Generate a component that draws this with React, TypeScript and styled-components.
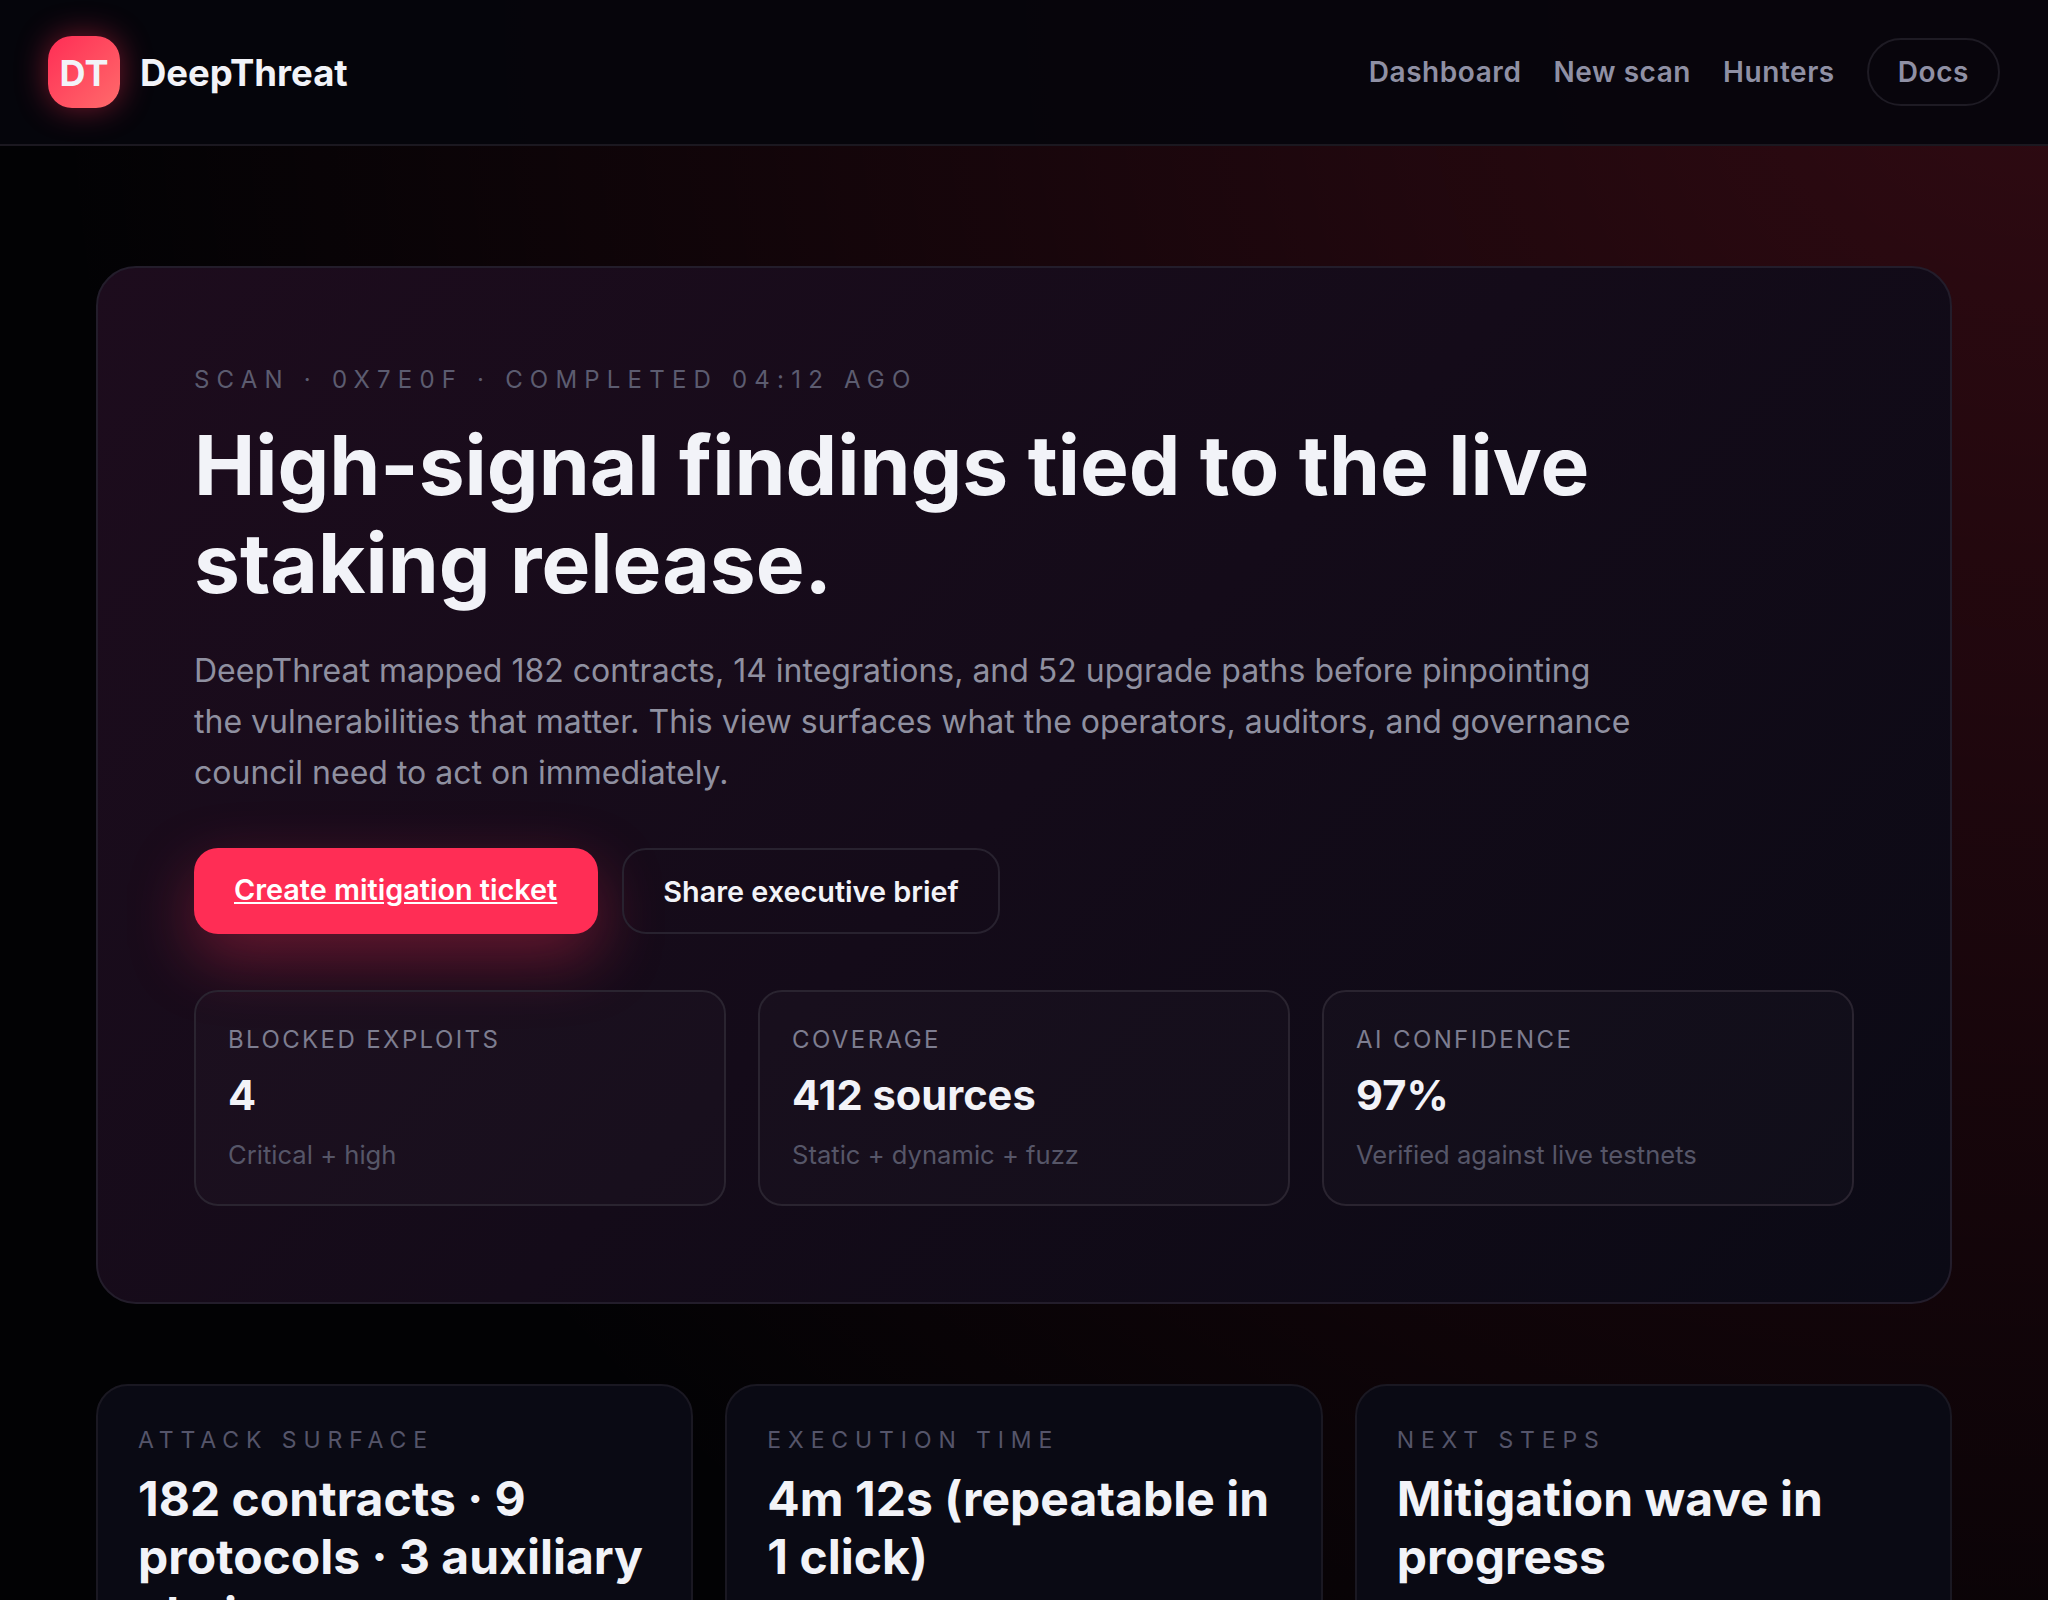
import React from 'react'
import styled, { createGlobalStyle } from 'styled-components'

const GlobalStyle = createGlobalStyle`
    html, body {
        margin: 0;
        padding: 0;
        background: #020204;
        color: #f2f3f8;
        font-family: Inter, "Noto Sans", sans-serif;
    }
    * {
        box-sizing: border-box;
    }
`;

const Page = styled.div`
    min-height: 1600px;
    background:
        radial-gradient(circle 2000px at top right, rgba(255, 45, 85, 0.18), transparent),
        #020204;
`;

const Header = styled.header`
    display: flex;
    align-items: center;
    justify-content: space-between;
    padding: 36px 48px;
    background: rgba(5, 5, 12, 0.92);
    border-bottom: 2px solid #1b1820;
`;

const Brand = styled.div`
    display: flex;
    align-items: center;
    gap: 20px;
    font-size: 36.5px;
    font-weight: 700;
`;

const BrandName = styled.span`
    padding-top: 2px;
`;

const Logo = styled.div`
    display: flex;
    align-items: center;
    justify-content: center;
    width: 72px;
    height: 72px;
    padding-top: 2px;
    border-radius: 24px;
    background: linear-gradient(135deg, #ff2d55, #ff6b6b);
    box-shadow: 0 0 32px rgba(255, 45, 85, 0.45);
    font-size: 36px;
`;

const Nav = styled.nav`
    display: flex;
    align-items: center;
    gap: 32px;
`;

const NavLink = styled.a<{ $pill?: boolean }>`
    color: #8f90a4;
    font-size: 28px;
    font-weight: 600;
    letter-spacing: 0.02em;
    ${(p) => p.$pill && `
        padding: 15px 29px;
        border: 2px solid #1e1b24;
        border-radius: 999px;
    `}
`;

const Main = styled.main`
    padding: 120px 96px 96px;
`;

const Hero = styled.section`
    padding: 96px;
    border: 2px solid #231d2b;
    border-radius: 40px;
    background: linear-gradient(135deg, #1d0c1d, #0b0a15);
`;

const Eyebrow = styled.div`
    color: #5c5c70;
    font-size: 24px;
    line-height: 31px;
    letter-spacing: 0.3em;
    text-transform: uppercase;
`;

const Title = styled.h1`
    margin: 22px 0 31px;
    max-width: 1440px;
    font-size: 82px;
    font-weight: 700;
    line-height: 1.2;
`;

const Lead = styled.p`
    margin: 0 0 50px;
    max-width: 1440px;
    color: #8f90a0;
    font-size: 32px;
    line-height: 1.6;
`;

const Actions = styled.div`
    display: flex;
    gap: 24px;
    margin-bottom: 56px;
`;

const PrimaryButton = styled.a`
    padding: 25px 41px 23px 40px;
    border-radius: 24px;
    background: #ff2d55;
    box-shadow: 0 24px 64px rgba(255, 45, 85, 0.35);
    color: #fff;
    font-size: 28.8px;
    font-weight: 600;
    line-height: 34px;
    text-decoration: underline;
`;

const GhostButton = styled.button`
    padding: 25px 39px 23px;
    border: 2px solid #28222f;
    border-radius: 24px;
    background: transparent;
    color: #f2f3f8;
    font-family: inherit;
    font-size: 28.8px;
    font-weight: 600;
    line-height: 34px;
`;

const Stats = styled.div`
    display: grid;
    grid-template-columns: repeat(3, 1fr);
    gap: 32px;
`;

const Stat = styled.div`
    padding: 32px;
    border: 2px solid #2a2430;
    border-radius: 24px;
    background: rgba(255, 255, 255, 0.02);
`;

const StatLabel = styled.div`
    color: #7d7d90;
    font-size: 24px;
    line-height: 32px;
    letter-spacing: 0.1em;
    text-transform: uppercase;
`;

const StatValue = styled.div`
    margin: 14px 0 18px;
    font-size: 41.6px;
    font-weight: 700;
    line-height: 50px;
`;

const StatNote = styled.div`
    color: #565668;
    font-size: 25.6px;
    line-height: 34px;
`;

const Cards = styled.div`
    display: grid;
    grid-template-columns: repeat(3, 1fr);
    gap: 32px;
    margin-top: 80px;
`;

const Card = styled.article`
    padding: 40px;
    border: 2px solid #1a1822;
    border-radius: 32px;
    background: #0a0a14;
`;

const CardLabel = styled.div`
    color: #55556a;
    font-size: 23px;
    line-height: 29px;
    letter-spacing: 0.3em;
    text-transform: uppercase;
`;

const CardTitle = styled.h2`
    margin: 15px 0 0;
    font-size: 48px;
    font-weight: 700;
    line-height: 1.2;
`;

const stats = [
    { label: 'Blocked exploits', value: '4', note: 'Critical + high' },
    { label: 'Coverage', value: '412 sources', note: 'Static + dynamic + fuzz' },
    { label: 'AI confidence', value: '97%', note: 'Verified against live testnets' },
]

const cards = [
    { label: 'Attack surface', title: '182 contracts · 9 protocols · 3 auxiliary chains' },
    { label: 'Execution time', title: '4m 12s (repeatable in 1 click)' },
    { label: 'Next steps', title: 'Mitigation wave in progress' },
]

function App() {
    return (
        <>
            <GlobalStyle />
            <Page>
                <Header>
                    <Brand>
                        <Logo>DT</Logo>
                        <BrandName>DeepThreat</BrandName>
                    </Brand>
                    <Nav>
                        <NavLink>Dashboard</NavLink>
                        <NavLink>New scan</NavLink>
                        <NavLink>Hunters</NavLink>
                        <NavLink $pill>Docs</NavLink>
                    </Nav>
                </Header>
                <Main>
                    <Hero>
                        <Eyebrow>Scan · 0x7e0f · Completed 04:12 ago</Eyebrow>
                        <Title>High-signal findings tied to the live staking release.</Title>
                        <Lead>
                            DeepThreat mapped 182 contracts, 14 integrations, and 52 upgrade paths before pinpointing
                            the vulnerabilities that matter. This view surfaces what the operators, auditors, and
                            governance council need to act on immediately.
                        </Lead>
                        <Actions>
                            <PrimaryButton href="#">Create mitigation ticket</PrimaryButton>
                            <GhostButton>Share executive brief</GhostButton>
                        </Actions>
                        <Stats>
                            {stats.map((s) => (
                                <Stat key={s.label}>
                                    <StatLabel>{s.label}</StatLabel>
                                    <StatValue>{s.value}</StatValue>
                                    <StatNote>{s.note}</StatNote>
                                </Stat>
                            ))}
                        </Stats>
                    </Hero>
                    <Cards>
                        {cards.map((c) => (
                            <Card key={c.label}>
                                <CardLabel>{c.label}</CardLabel>
                                <CardTitle>{c.title}</CardTitle>
                            </Card>
                        ))}
                    </Cards>
                </Main>
            </Page>
        </>
    );
}

export default App;
